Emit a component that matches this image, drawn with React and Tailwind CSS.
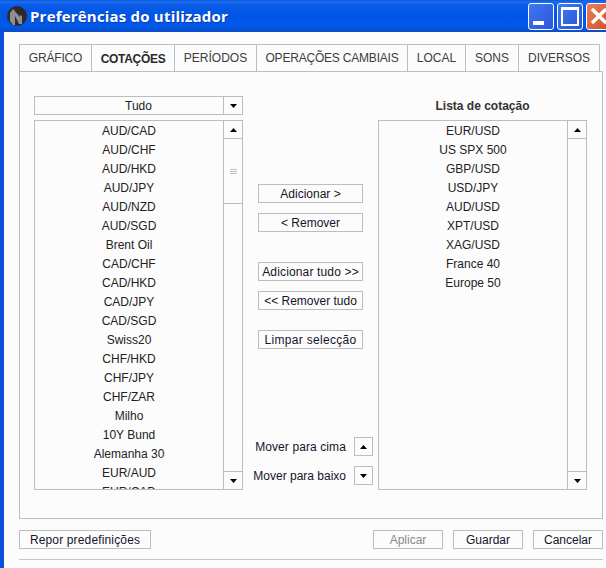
import React from "react";

const leftItems = [
  "AUD/CAD", "AUD/CHF", "AUD/HKD", "AUD/JPY", "AUD/NZD", "AUD/SGD", "Brent Oil",
  "CAD/CHF", "CAD/HKD", "CAD/JPY", "CAD/SGD", "Swiss20", "CHF/HKD", "CHF/JPY",
  "CHF/ZAR", "Milho", "10Y Bund", "Alemanha 30", "EUR/AUD", "EUR/CAD",
];
const rightItems = [
  "EUR/USD", "US SPX 500", "GBP/USD", "USD/JPY", "AUD/USD", "XPT/USD", "XAG/USD",
  "France 40", "Europe 50",
];
const tabs = [
  { label: "GRÁFICO", width: "w-[73px]", track: "tracking-[-0.2px]" },
  { label: "COTAÇÕES", width: "w-[83px]", track: "tracking-[-0.3px]", active: true },
  { label: "PERÍODOS", width: "w-[82px]", track: "" },
  { label: "OPERAÇÕES CAMBIAIS", width: "w-[151px]", track: "tracking-[-0.2px]" },
  { label: "LOCAL", width: "w-[58px]", track: "" },
  { label: "SONS", width: "w-[53px]", track: "" },
  { label: "DIVERSOS", width: "w-[81px]", track: "" },
];

function Arrow({ up }) {
  return (
    <svg width="7" height="4" viewBox="0 0 7 4" className="block">
      <path d={up ? "M3.5 0 L7 4 L0 4 Z" : "M0 0 L7 0 L3.5 4 Z"} fill="#000" />
    </svg>
  );
}

function Btn({ children, className = "" }) {
  return (
    <div className={`h-[19px] flex items-center justify-center border border-[#bdbdbd] text-[12px] leading-none text-[#14142b] ${className}`}>
      {children}
    </div>
  );
}

function ListBox({ items }) {
  return (
    <div className="h-[370px] flex border border-[#bdbdbd] overflow-hidden">
      <div className="flex-1 overflow-hidden pt-px">
        {items.map((item) => (
          <div key={item} className="h-[19px] leading-[19px] text-center text-[12px] text-[#222]">
            {item}
          </div>
        ))}
      </div>
      <div className="w-[19px] shrink-0 flex flex-col border-l border-[#bdbdbd]">
        <div className="h-[18px] flex items-center justify-center border-b border-[#bdbdbd]">
          <Arrow up />
        </div>
        <div className="flex-1">
          {items.length > 10 && (
            <div className="h-[65px] flex flex-col items-center justify-center gap-px border-b border-[#bdbdbd]">
              <div className="w-[7px] h-px bg-[#bdbdbd]" />
              <div className="w-[7px] h-px bg-[#bdbdbd]" />
              <div className="w-[7px] h-px bg-[#bdbdbd]" />
            </div>
          )}
        </div>
        <div className="h-[18px] flex items-center justify-center border-t border-[#bdbdbd]">
          <Arrow />
        </div>
      </div>
    </div>
  );
}

function TitleBar() {
  return (
    <div className="h-[32px] shrink-0 flex items-center bg-[linear-gradient(180deg,#0a58d8_0px,#1a6cf0_2px,#0a5ce8_5px,#0055e5_16px,#0058ea_26px,#0a4cc8_32px)]">
      <svg width="20" height="20" viewBox="0 0 20 20" className="ml-[7px] shrink-0">
        <circle cx="10" cy="10" r="10" fill="#2e2a2c" />
        <path d="M3 15 V7 L6 3 L13 11 V9 L15 10 V18 L12 18 L8 10 V19 L6 19 Z" fill="#8f8f8f" />
      </svg>
      <span className="ml-[3px] text-[15px] font-bold text-white tracking-[0.2px] [font-family:'Open_Sans',sans-serif] [text-shadow:1px_1px_0_#0a3ca8]">
        Preferências do utilizador
      </span>
      <div className="ml-auto flex gap-[3px] mr-[-6px]">
        <div className="w-[26px] h-[27px] flex items-end border border-white rounded-[3px] bg-[linear-gradient(135deg,#3f78ee,#2a55dc)] pl-[4px] pb-[4px]">
          <div className="w-[11px] h-[4px] bg-white" />
        </div>
        <div className="w-[26px] h-[27px] flex items-center justify-center border border-white rounded-[3px] bg-[linear-gradient(135deg,#3f78ee,#2a55dc)]">
          <div className="w-[18px] h-[19px] border-2 border-t-[3px] border-white" />
        </div>
        <div className="w-[26px] h-[27px] flex items-center justify-center border border-white rounded-[3px] bg-[linear-gradient(135deg,#e8805c,#d0502a)]">
          <svg width="20" height="20" viewBox="0 0 20 20">
            <path d="M3 3 L17 17 M17 3 L3 17" stroke="#fff" strokeWidth="3.5" />
          </svg>
        </div>
      </div>
    </div>
  );
}

export default function App() {
  return (
    <div className="w-[606px] h-[568px] overflow-hidden flex flex-col bg-[#fcfcfc] font-['Liberation_Sans',Arial,sans-serif]">
      <TitleBar />
      <div className="flex-1 border-l-4 border-[#0a50d8] pl-[15px] pr-[3px] pt-[12px]">
        <div className="flex relative z-10">
          {tabs.map((tab, i) => (
            <div
              key={tab.label}
              className={`${tab.width} ${tab.track} h-[28px] flex items-center justify-center border-t border-r border-[#bdbdbd] text-[12px] ${i === 0 ? "border-l" : ""} ${
                tab.active ? "font-bold text-[#2a2a2a]" : "border-b text-[#3c3c3c]"
              }`}
            >
              {tab.label}
            </div>
          ))}
        </div>
        <div className="-mt-px h-[448px] flex border border-[#bdbdbd] pl-[14px] pt-[24px]">
          <div className="w-[209px] shrink-0 flex flex-col gap-[5px]">
            <div className="h-[19px] flex border border-[#bdbdbd]">
              <div className="flex-1 flex items-center justify-center pl-[19px] text-[12px] text-[#222]">Tudo</div>
              <div className="w-[19px] flex items-center justify-center border-l border-[#bdbdbd]">
                <Arrow />
              </div>
            </div>
            <ListBox items={leftItems} />
          </div>

          <div className="w-[135px] shrink-0 flex flex-col pt-[88px]">
            <Btn className="mx-[15px]">Adicionar &gt;</Btn>
            <Btn className="mx-[15px] mt-[10px]">&lt; Remover</Btn>
            <Btn className="mx-[15px] mt-[30px] tracking-[0.15px]">Adicionar tudo &gt;&gt;</Btn>
            <Btn className="mx-[15px] mt-[10px]">&lt;&lt; Remover tudo</Btn>
            <Btn className="mx-[15px] mt-[20px] tracking-[0.3px]">Limpar selecção</Btn>
            <div className="mt-[88px] flex items-center justify-end gap-[8px] pr-[5px]">
              <span className="text-[12px] tracking-[0.1px] text-[#14142b]">Mover para cima</span>
              <Btn className="w-[19px]"><Arrow up /></Btn>
            </div>
            <div className="mt-[10px] flex items-center justify-end gap-[8px] pr-[5px]">
              <span className="text-[12px] text-[#14142b]">Mover para baixo</span>
              <Btn className="w-[19px]"><Arrow /></Btn>
            </div>
          </div>

          <div className="w-[209px] shrink-0 flex flex-col gap-[5px]">
            <div className="h-[19px] flex items-center justify-center text-[12px] font-bold text-[#333]">
              Lista de cotação
            </div>
            <ListBox items={rightItems} />
          </div>
        </div>

        <div className="mt-[11px] flex gap-[10px]">
          <Btn className="w-[132px] mr-auto tracking-[0.15px]">Repor predefinições</Btn>
          <Btn className="w-[70px] !text-[#8a8a8a]">Aplicar</Btn>
          <Btn className="w-[70px]">Guardar</Btn>
          <Btn className="w-[70px]">Cancelar</Btn>
        </div>
        <div className="mt-[10px] h-px bg-[#c8c8c8]" />
      </div>
    </div>
  );
}
